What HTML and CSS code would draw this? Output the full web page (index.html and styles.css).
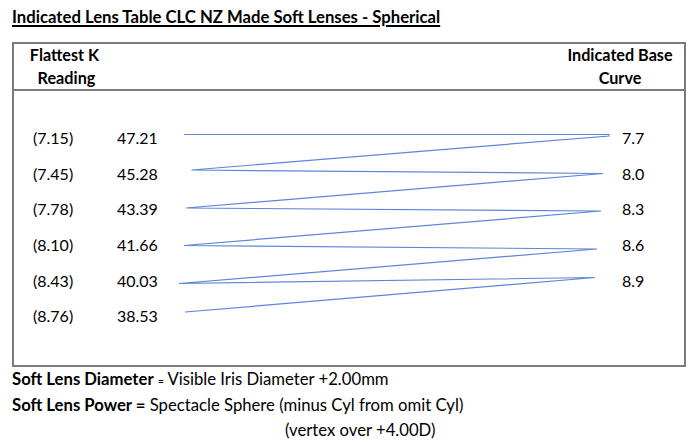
FILE: index.html
```html
<!DOCTYPE html>
<html>
<head>
<meta charset="utf-8">
<link rel="stylesheet" href="styles.css">
</head>
<body>
<h1 class="title">Indicated Lens Table CLC NZ Made Soft Lenses - Spherical</h1>
<div class="table">
  <div class="thead">
    <div class="hcell hleft">Flattest K<br>&nbsp;Reading</div>
    <div class="hcell hright">Indicated Base<br>Curve</div>
  </div>
  <div class="tbody">
    <svg class="links" width="670" height="274" viewBox="14 92 670 274">
      <polyline points="184,135.5 609,135.5 609,137 191.5,171 603,174.5 186,209 601,212 184,246.5 597,250 179,284.5 595,278.5 185,313" fill="none" stroke="#5f85d6" stroke-width="1.2" stroke-linejoin="miter"/>
    </svg>
    <div class="row"><span class="k">(7.15)</span><span class="d">47.21</span><span class="bc">7.7</span></div>
    <div class="row"><span class="k">(7.45)</span><span class="d">45.28</span><span class="bc">8.0</span></div>
    <div class="row"><span class="k">(7.78)</span><span class="d">43.39</span><span class="bc">8.3</span></div>
    <div class="row"><span class="k">(8.10)</span><span class="d">41.66</span><span class="bc">8.6</span></div>
    <div class="row"><span class="k">(8.43)</span><span class="d">40.03</span><span class="bc">8.9</span></div>
    <div class="row"><span class="k">(8.76)</span><span class="d">38.53</span><span class="bc"></span></div>
  </div>
</div>
<div class="notes">
  <p class="note"><b>Soft Lens Diameter</b> <b class="smalleq">=</b> Visible Iris Diameter +2.00mm</p>
  <p class="note"><b>Soft Lens Power =</b> Spectacle Sphere (minus Cyl from omit Cyl)</p>
  <p class="note indent">(vertex over +4.00D)</p>
</div>
</body>
</html>
```
FILE: styles.css
```css
html, body {
  margin: 0;
  padding: 0;
  background: #ffffff;
}
body {
  font-family: Lato, "Open Sans", "Liberation Sans", sans-serif;
  color: #000000;
  width: 700px;
  height: 442px;
  overflow: hidden;
}
.title {
  margin: 0;
  padding: 8px 0 0 12px;
  font-size: 16.7px;
  line-height: 18px;
  font-weight: 700;
  text-decoration: underline;
  text-underline-offset: 2px;
  text-decoration-thickness: 1.5px;
}
.table {
  margin: 16px 0 0 12px;
  width: 670px;
  border: 2px solid #7b7b7b;
}
.thead {
  display: flex;
  justify-content: space-between;
  height: 45px;
  border-bottom: 2px solid #7b7b7b;
}
.hcell {
  font-weight: 700;
  font-size: 16.2px;
  line-height: 22.5px;
  text-align: center;
}
.hleft {
  width: 101px;
}
.hright {
  width: 128px;
}
.tbody {
  position: relative;
  height: 274px;
  padding-top: 29px;
  box-sizing: border-box;
}
.links {
  position: absolute;
  left: 0;
  top: 0;
}
.row {
  display: grid;
  grid-template-columns: 84px 1fr 62px;
  padding-left: 19px;
  height: 35.7px;
  align-items: center;
  font-size: 16px;
  line-height: 20px;
}
.notes {
  padding-left: 12px;
}
.note {
  margin: 0;
  font-size: 16.7px;
  line-height: 24.4px;
}
.smalleq {
  font-size: 10px;
}
.indent {
  padding-left: 273px;
}
```
